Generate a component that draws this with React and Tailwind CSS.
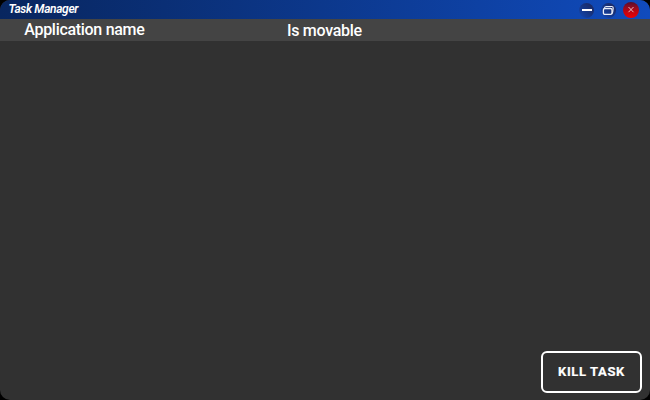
function MinimizeButton() {
  return (
    <button className="flex size-[15px] items-center justify-center rounded-full bg-linear-to-tr from-[#1148b4] via-[#153584] to-[#1d2558]">
      <span className="h-[2px] w-[10px] bg-white" />
    </button>
  );
}

function RestoreButton() {
  return (
    <button className="size-[15px] rounded-full bg-linear-to-tr from-[#1148b4] via-[#153584] to-[#1d2558]">
      <svg viewBox="0 0 15 15" className="size-[15px]" fill="none" stroke="#e9edf8">
        <path d="M3.3 4.8Q4 3.5 5.2 3.5H10.7Q12.2 3.5 12.2 5L11.7 9Q11.5 10.2 10.5 11" strokeWidth="1.2" />
        <rect x="2.4" y="5.5" width="8.6" height="5.9" rx="1.4" strokeWidth="1.3" />
      </svg>
    </button>
  );
}

function CloseButton() {
  return (
    <button className="size-4 rounded-full bg-linear-to-b from-[#590b2a] via-[#b30512] to-[#f00000]">
      <svg viewBox="0 0 16 16" className="size-4" stroke="#f0cdd0" strokeWidth="0.9">
        <path d="M5.5 5L10.5 10.2M10.5 5L5.5 10.2" />
      </svg>
    </button>
  );
}

export default function App() {
  return (
    <div className="h-[400px] w-[650px] bg-black font-['Roboto',sans-serif] text-white">
      <main className="flex h-full flex-col overflow-hidden rounded-[10px] bg-[#313131]">
        <header className="flex h-[19px] shrink-0 items-start justify-between bg-linear-to-r from-[#08265f] to-[#104bbd] pr-[11px] pl-[8.5px]">
          <h1 className="text-[12px] leading-[18px] font-semibold tracking-[-0.36px] italic">Task Manager</h1>
          <div className="flex items-center gap-[7px] pt-[2px]">
            <MinimizeButton />
            <RestoreButton />
            <CloseButton />
          </div>
        </header>
        <div className="flex h-[22px] shrink-0 bg-[#444444] text-[16px] leading-[22px] font-medium tracking-[-0.3px]">
          <span className="w-[287px] pl-[24.3px]">Application name</span>
          <span className="pt-px">Is movable</span>
        </div>
        <div className="flex flex-1 items-end justify-end pr-2 pb-[7px]">
          <button className="h-[42px] w-[101px] rounded-[6px] border-2 border-white text-[13px] font-bold tracking-[0.6px] [-webkit-text-stroke:0.2px_white]">
            KILL TASK
          </button>
        </div>
      </main>
    </div>
  );
}
